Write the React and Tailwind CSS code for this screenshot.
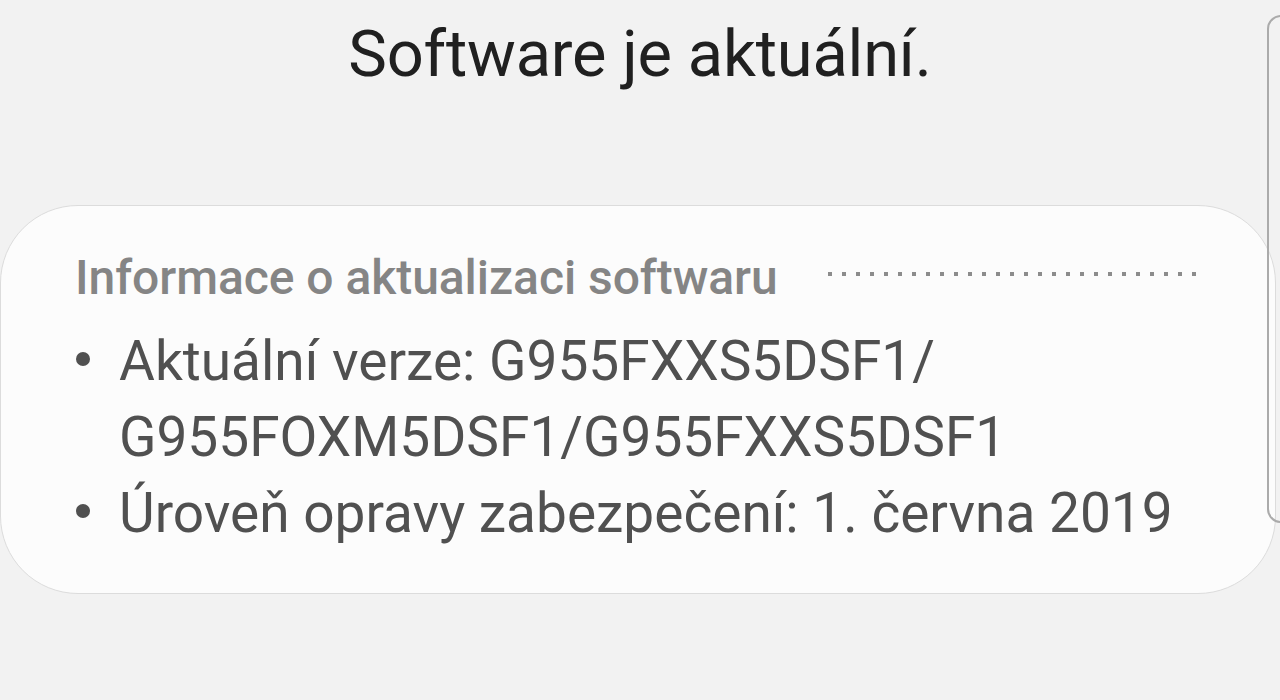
export default function App() {
  const dots = Array.from({ length: 27 });
  return (
    <div
      className="relative w-[1280px] h-[700px] overflow-hidden bg-[#f2f2f2]"
      style={{ fontFamily: 'Roboto, "Noto Sans", sans-serif' }}
    >
      <div className="pt-[15px] flex justify-center">
        <h1 className="text-[65px] leading-[78px] text-[#202020] font-normal tracking-[-0.2px]">
          Software je aktuální.
        </h1>
      </div>

      <div className="mt-[112px] mr-[4px] rounded-[78px] border border-[#dcdcdc] bg-[#fcfcfc] pt-[42px] pb-[42px] pl-[74px] pr-[80px]">
        <div className="flex items-center h-[60px]">
          <span className="text-[48px] leading-[60px] font-medium text-[#858585] tracking-[-0.05px]">
            Informace o aktualizaci softwaru
          </span>
          <div className="ml-auto mr-[-1px] mt-[-8px] flex gap-[10px]">
            {dots.map((_, i) => (
              <span key={i} className="block w-[4px] h-[4px] bg-[#8c8c8c]" />
            ))}
          </div>
        </div>
        <ul className="mt-[15px] text-[55px] leading-[76px] text-[#505050]">
          <li className="flex">
            <span className="w-[44px] shrink-0 flex pt-[29px]">
              <span className="block w-[14px] h-[14px] rounded-full bg-[#505050] ml-[1px]" />
            </span>
            <span>
              Aktuální verze: G955FXXS5DSF1/
              <br />
              G955FOXM5DSF1/G955FXXS5DSF1
            </span>
          </li>
          <li className="flex">
            <span className="w-[44px] shrink-0 flex pt-[29px]">
              <span className="block w-[14px] h-[14px] rounded-full bg-[#505050] ml-[1px]" />
            </span>
            <span>Úroveň opravy zabezpečení: 1. června 2019</span>
          </li>
        </ul>
      </div>

      <div className="absolute left-[1267px] top-[15px] w-[30px] h-[508px] rounded-l-[14px] border-2 border-[#ababab] border-r-0" />
    </div>
  );
}
